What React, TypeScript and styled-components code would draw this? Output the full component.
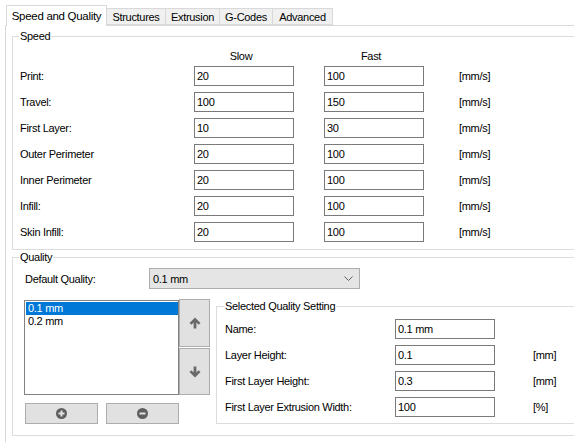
import React from 'react';
import styled, { createGlobalStyle } from 'styled-components';

const GlobalStyle = createGlobalStyle`
  html, body {
    margin: 0;
    padding: 0;
    background: #fff;
  }
  body {
    font-family: "Liberation Sans", Arial, sans-serif;
    font-size: 11px;
    letter-spacing: -0.3px;
    color: #000;
    overflow: hidden;
  }
`;

const Window = styled.div`
  width: 574px;
  height: 442px;
  overflow: hidden;
  padding: 5px 0 0 5px;
  box-sizing: border-box;
`;

const TabStrip = styled.div`
  display: flex;
  align-items: flex-end;
  height: 20px;
  padding-left: 1px;
  position: relative;
  z-index: 1;
`;

const Tab = styled.div<{ $active?: boolean; $w: number }>`
  box-sizing: border-box;
  display: flex;
  align-items: center;
  justify-content: center;
  width: ${(p) => p.$w}px;
  height: ${(p) => (p.$active ? 21 : 17)}px;
  margin-bottom: ${(p) => (p.$active ? -1 : 0)}px;
  margin-left: ${(p) => (p.$active ? 0 : -1)}px;
  border: 1px solid #d9d9d9;
  border-bottom: ${(p) => (p.$active ? 'none' : '1px solid #d9d9d9')};
  background: ${(p) => (p.$active ? '#fff' : '#f0f0f0')};
  font-size: ${(p) => (p.$active ? 11.5 : 11)}px;
  white-space: nowrap;
`;

const Page = styled.div`
  box-sizing: border-box;
  width: 640px;
  height: 460px;
  border: 1px solid #d9d9d9;
  background: #fff;
  padding: 4px 0 0 6px;
`;

const Group = styled.fieldset<{ $pl: number; $pb: number }>`
  margin: 0;
  min-width: 0;
  border: 1px solid #dcdcdc;
  padding: 0 0 ${(p) => p.$pb}px ${(p) => p.$pl}px;
`;

const Legend = styled.legend`
  padding: 0 1px;
  margin-left: -1px;
  line-height: 13px;
  font-size: 11px;
`;

const SpeedGroup = styled(Group)`
  width: 620px;
  box-sizing: border-box;
`;

const QualityGroup = styled(Group)`
  width: 620px;
  box-sizing: border-box;
  margin-top: 1px;
`;

const SpeedHeader = styled.div`
  display: grid;
  grid-template-columns: 171px 130px 100px;
  margin-top: 7px;
  line-height: 13px;
`;

const ColumnTitle = styled.div`
  width: 100px;
  text-align: center;
`;

const SpeedGrid = styled.div`
  display: grid;
  grid-template-columns: 174px 130px 135px auto;
  row-gap: 6px;
  margin-top: 3px;
  align-items: center;
`;

const Field = styled.div`
  box-sizing: border-box;
  width: 100px;
  height: 20px;
  border: 1px solid #7a7a7a;
  background: #fff;
  padding: 0 2px;
  display: flex;
  align-items: center;
`;

const Label = styled.div`
  white-space: nowrap;
`;

const QualityRow = styled.div`
  display: flex;
  align-items: center;
  margin-top: 4px;
  padding-left: 5px;
`;

const QualityLabel = styled.div`
  width: 124px;
`;

const Combo = styled.div`
  box-sizing: border-box;
  width: 211px;
  height: 21px;
  border: 1px solid #adadad;
  background: #e5e5e5;
  display: flex;
  align-items: center;
  justify-content: space-between;
  padding: 0 6px 0 3px;
`;

const Lower = styled.div`
  display: flex;
  align-items: flex-start;
  margin-top: 10px;
  margin-left: 4px;
`;

const ListBlock = styled.div`
  display: grid;
  grid-template-columns: 155px 31px;
  row-gap: 8px;
`;

const ListBox = styled.div`
  box-sizing: border-box;
  margin-top: 1px;
  height: 95px;
  border: 1px solid #828282;
  background: #fff;
  padding: 1px 0 1px 1px;
`;

const ListItem = styled.div<{ $selected?: boolean }>`
  height: 13px;
  line-height: 13px;
  padding-left: 2px;
  background: ${(p) => (p.$selected ? '#0078d7' : 'transparent')};
  color: ${(p) => (p.$selected ? '#fff' : '#000')};
`;

const ArrowColumn = styled.div`
  display: flex;
  flex-direction: column;
  gap: 1px;
`;

const GrayButton = styled.div<{ $w: number; $h: number }>`
  box-sizing: border-box;
  width: ${(p) => p.$w}px;
  height: ${(p) => p.$h}px;
  border: 1px solid #adadad;
  background: #e1e1e1;
  display: flex;
  align-items: center;
  justify-content: center;
`;

const ButtonRow = styled.div`
  grid-column: 1 / span 2;
  display: flex;
  gap: 8px;
  padding-left: 1px;
`;

const SelectedGroup = styled(Group)`
  flex: 1;
  margin-left: 6px;
  margin-top: 1px;
`;

const SettingGrid = styled.div`
  display: grid;
  grid-template-columns: 170px 138px auto;
  row-gap: 6px;
  margin-top: 6px;
  align-items: center;
`;

const ArrowIcon = ({ down }: { down?: boolean }) => (
  <svg width="12" height="12" viewBox="0 0 12 12" style={{ transform: down ? 'rotate(180deg)' : undefined }}>
    <path d="M6 0.5 L11.5 6 L9.6 7.8 L7.4 5.6 V11.5 H4.6 V5.6 L2.4 7.8 L0.5 6 Z" fill="#6a6a6a" />
  </svg>
);

const CircleIcon = ({ plus }: { plus?: boolean }) => (
  <svg width="11" height="11" viewBox="0 0 11 11">
    <circle cx="5.5" cy="5.5" r="5.5" fill="#5f5f5f" />
    <rect x="2.5" y="4.5" width="6" height="2" fill="#e1e1e1" />
    {plus && <rect x="4.5" y="2.5" width="2" height="6" fill="#e1e1e1" />}
  </svg>
);

const Chevron = () => (
  <svg width="9" height="5" viewBox="0 0 9 5">
    <path d="M0.5 0.5 L4.5 4.5 L8.5 0.5" fill="none" stroke="#606060" strokeWidth="1" />
  </svg>
);

const speeds = [
  { label: 'Print:', slow: '20', fast: '100' },
  { label: 'Travel:', slow: '100', fast: '150' },
  { label: 'First Layer:', slow: '10', fast: '30' },
  { label: 'Outer Perimeter', slow: '20', fast: '100' },
  { label: 'Inner Perimeter', slow: '20', fast: '100' },
  { label: 'Infill:', slow: '20', fast: '100' },
  { label: 'Skin Infill:', slow: '20', fast: '100' },
];

const settings = [
  { label: 'Name:', value: '0.1 mm', unit: '' },
  { label: 'Layer Height:', value: '0.1', unit: '[mm]' },
  { label: 'First Layer Height:', value: '0.3', unit: '[mm]' },
  { label: 'First Layer Extrusion Width:', value: '100', unit: '[%]' },
];

const tabs = [
  { label: 'Speed and Quality', width: 101 },
  { label: 'Structures', width: 60 },
  { label: 'Extrusion', width: 55 },
  { label: 'G-Codes', width: 54 },
  { label: 'Advanced', width: 61 },
];

export default function App() {
  return (
    <>
      <GlobalStyle />
      <Window>
        <TabStrip>
          {tabs.map((t, i) => (
            <Tab key={t.label} $active={i === 0} $w={t.width}>
              {t.label}
            </Tab>
          ))}
        </TabStrip>
        <Page>
          <SpeedGroup $pl={7} $pb={7}>
            <Legend>Speed</Legend>
            <SpeedHeader>
              <div />
              <ColumnTitle>Slow</ColumnTitle>
              <ColumnTitle>Fast</ColumnTitle>
            </SpeedHeader>
            <SpeedGrid>
              {speeds.map((s) => (
                <React.Fragment key={s.label}>
                  <Label>{s.label}</Label>
                  <Field>{s.slow}</Field>
                  <Field>{s.fast}</Field>
                  <Label>[mm/s]</Label>
                </React.Fragment>
              ))}
            </SpeedGrid>
          </SpeedGroup>

          <QualityGroup $pl={7} $pb={11}>
            <Legend>Quality</Legend>
            <QualityRow>
              <QualityLabel>Default Quality:</QualityLabel>
              <Combo>
                <span>0.1 mm</span>
                <Chevron />
              </Combo>
            </QualityRow>
            <Lower>
              <ListBlock>
                <ListBox>
                  <ListItem $selected>0.1 mm</ListItem>
                  <ListItem>0.2 mm</ListItem>
                </ListBox>
                <ArrowColumn>
                  <GrayButton $w={31} $h={48}>
                    <ArrowIcon />
                  </GrayButton>
                  <GrayButton $w={31} $h={47}>
                    <ArrowIcon down />
                  </GrayButton>
                </ArrowColumn>
                <ButtonRow>
                  <GrayButton $w={73} $h={21}>
                    <CircleIcon plus />
                  </GrayButton>
                  <GrayButton $w={73} $h={21}>
                    <CircleIcon />
                  </GrayButton>
                </ButtonRow>
              </ListBlock>
              <SelectedGroup $pl={8} $pb={6}>
                <Legend>Selected Quality Setting</Legend>
                <SettingGrid>
                  {settings.map((s) => (
                    <React.Fragment key={s.label}>
                      <Label>{s.label}</Label>
                      <Field>{s.value}</Field>
                      <Label>{s.unit}</Label>
                    </React.Fragment>
                  ))}
                </SettingGrid>
              </SelectedGroup>
            </Lower>
          </QualityGroup>
        </Page>
      </Window>
    </>
  );
}
